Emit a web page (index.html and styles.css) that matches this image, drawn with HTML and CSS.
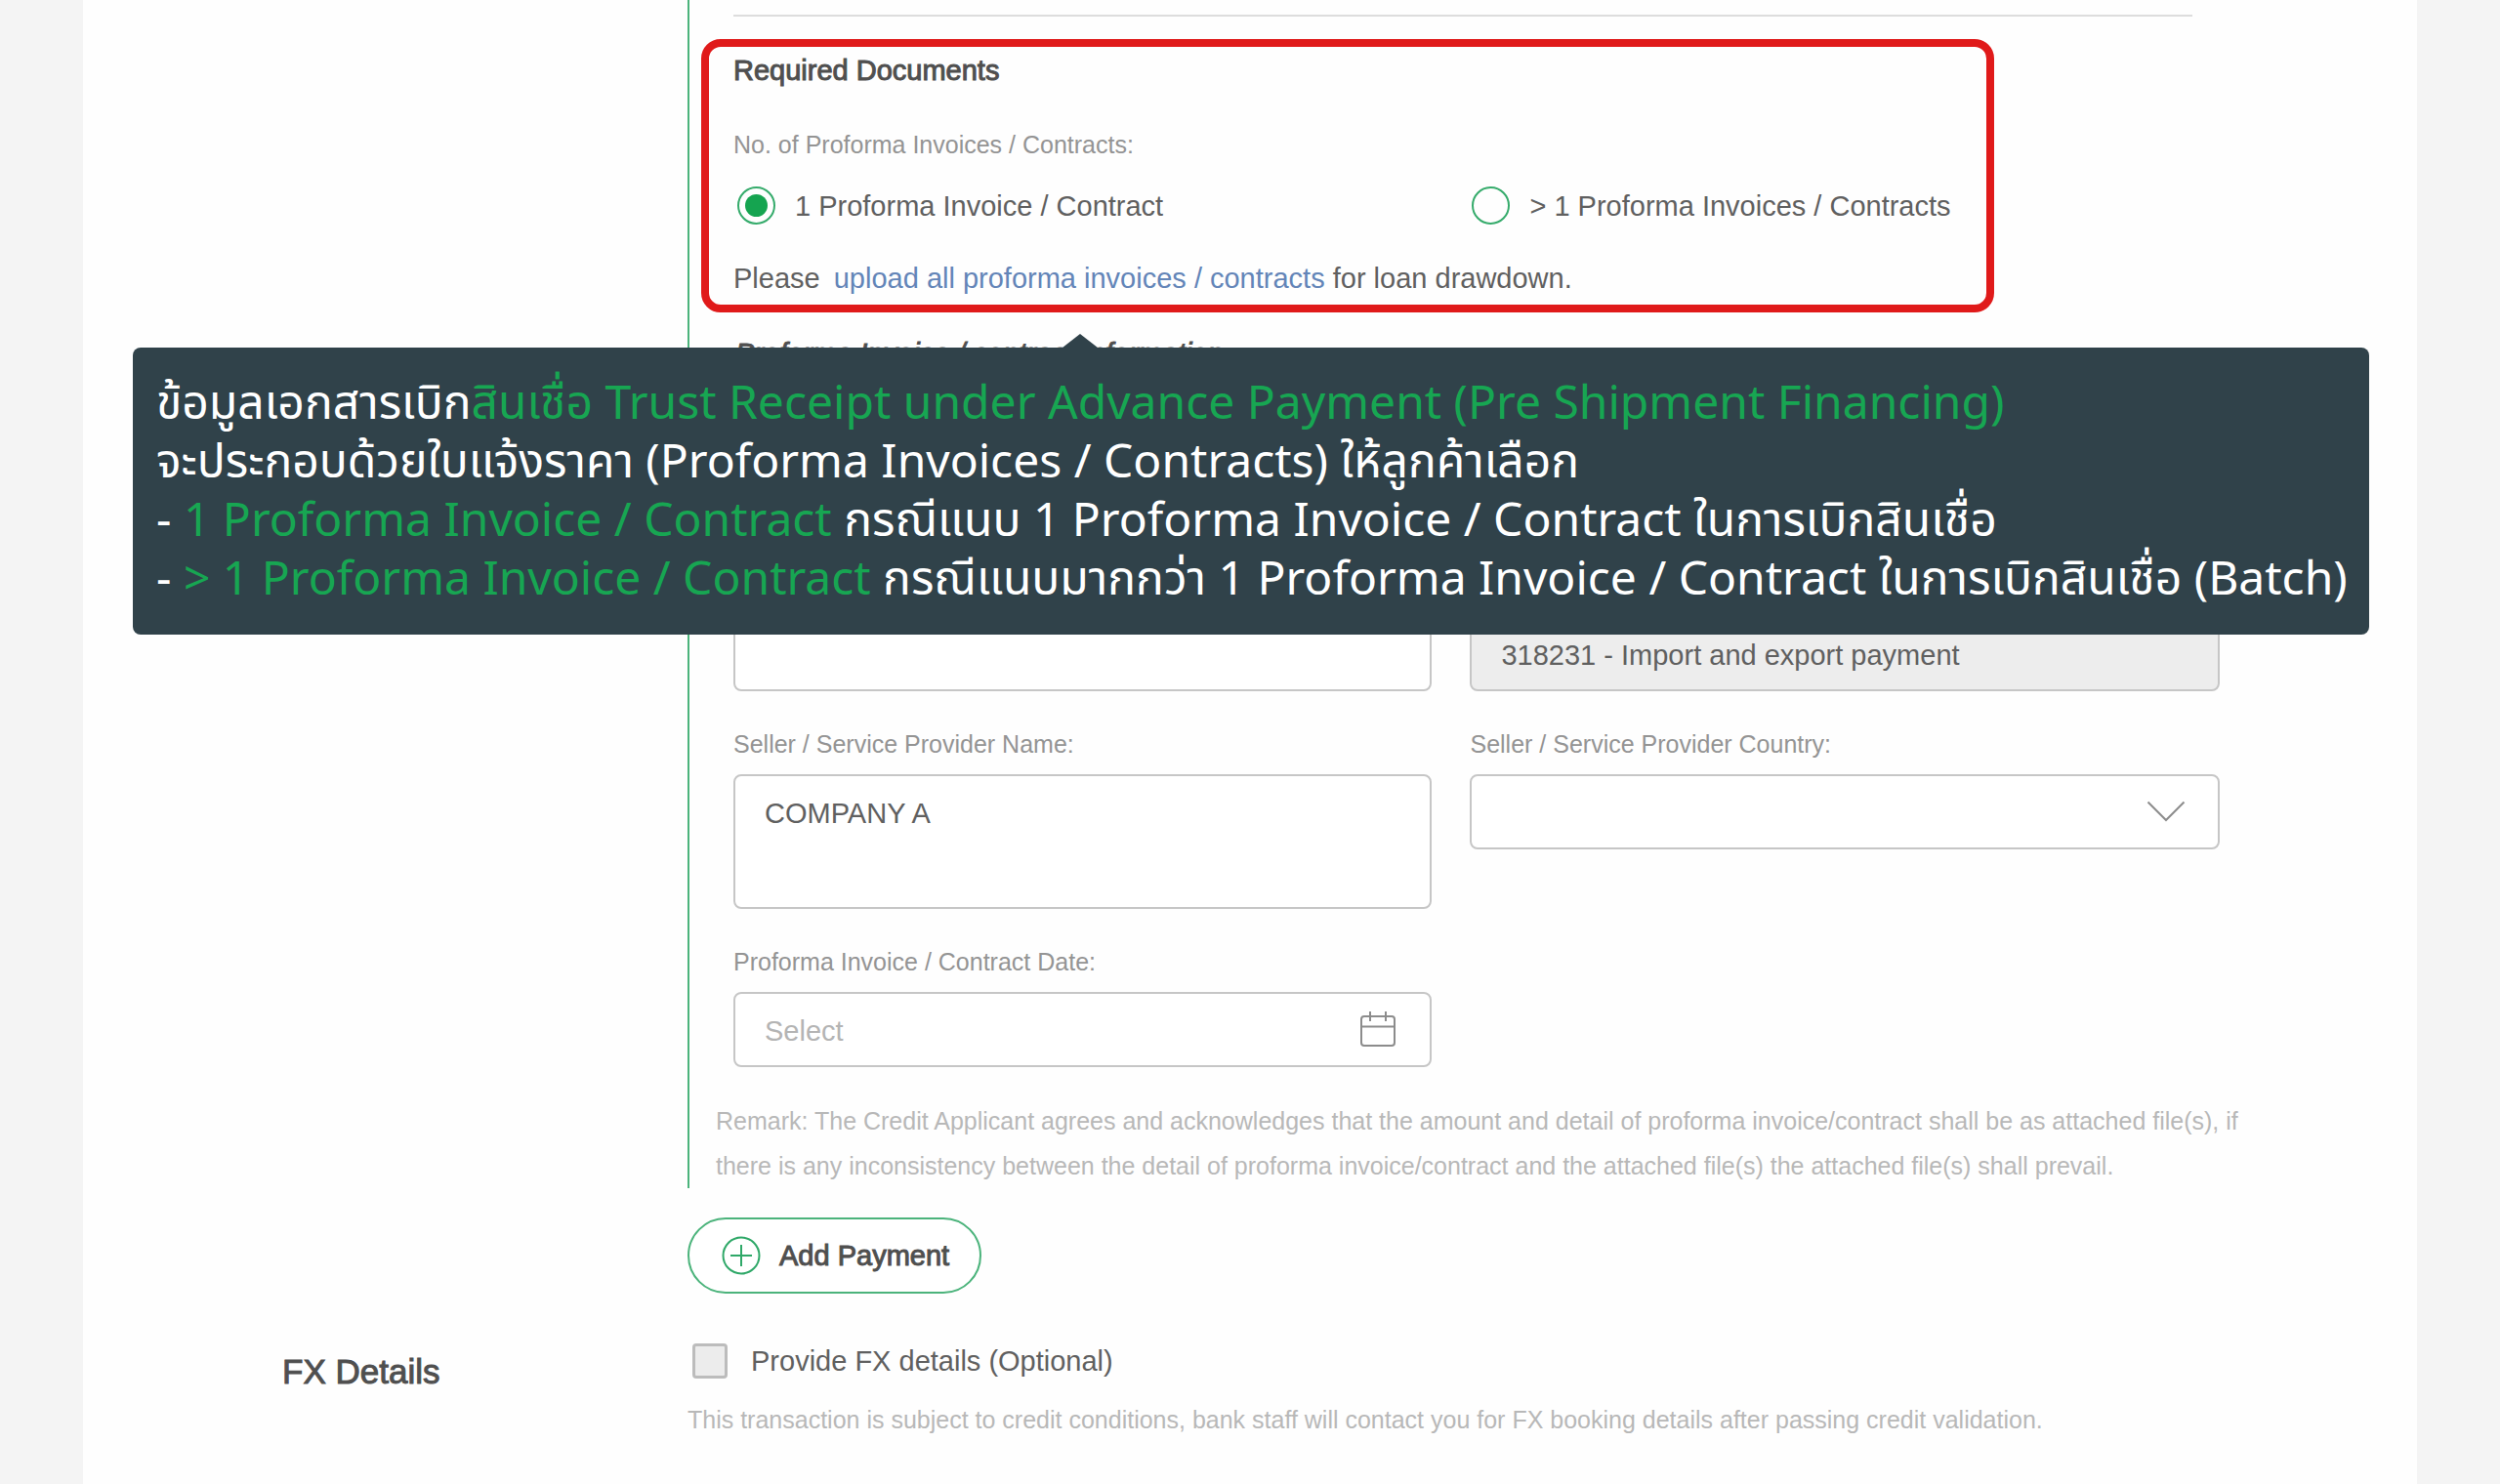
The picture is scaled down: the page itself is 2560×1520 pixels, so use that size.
FILE: index.html
```html
<!DOCTYPE html>
<html lang="en">
  <head>
    <meta charset="UTF-8" />
    <meta name="viewport" content="width=device-width, initial-scale=1.0" />
    <title>Loan Drawdown</title>
    <link rel="stylesheet" href="styles.css">
  </head>

  <body>
    <main class="sheet">
      <section class="row">
        <div class="row-title"></div>
        <div class="row-body">
          <div class="payment">
            <hr class="divider" />

            <!-- Required Documents -->
            <div class="highlight">
              <h3 class="heading">Required Documents</h3>
              <p class="label" id="docCount">No. of Proforma Invoices / Contracts:</p>
              <div class="radios" role="radiogroup" aria-labelledby="docCount">
                <label class="choice">
                  <input type="radio" name="docs" value="one" checked />
                  1 Proforma Invoice / Contract
                </label>
                <label class="choice">
                  <input type="radio" name="docs" value="many" />
                  &gt; 1 Proforma Invoices / Contracts
                </label>
              </div>
              <p class="upload">Please <a href="#">upload all proforma invoices / contracts</a> for loan drawdown.</p>
            </div>

            <!-- Invoice / contract information -->
            <h3 class="heading info-heading">Proforma Invoice / contract Information</h3>
            <div class="fields">
              <div class="field">
                <input type="text" aria-label="Proforma Invoice / Contract No." />
              </div>
              <div class="field">
                <input type="text" aria-label="Purpose" value="318231 - Import and export payment" disabled />
              </div>
              <div class="field">
                <label class="label" for="sellerName">Seller / Service Provider Name:</label>
                <textarea id="sellerName">COMPANY A</textarea>
              </div>
              <div class="field">
                <label class="label" for="sellerCountry">Seller / Service Provider Country:</label>
                <div class="control">
                  <select id="sellerCountry">
                    <option value=""></option>
                  </select>
                  <svg class="icon" viewBox="0 0 40 40" aria-hidden="true">
                    <path d="M1.500 10.500 L20 29 L38.500 10.500" />
                  </svg>
                </div>
              </div>
              <div class="field">
                <label class="label" for="contractDate">Proforma Invoice / Contract Date:</label>
                <div class="control">
                  <input type="text" id="contractDate" placeholder="Select" />
                  <svg class="icon" viewBox="0 0 40 40" aria-hidden="true">
                    <rect x="3" y="7" width="34" height="30" rx="3" />
                    <path d="M3 17.500 H37 M12 2 V12 M28 2 V12" />
                  </svg>
                </div>
              </div>
            </div>

            <p class="note remark">Remark: The Credit Applicant agrees and acknowledges that the amount and detail of proforma invoice/contract shall be as attached file(s), if there is any inconsistency between the detail of proforma invoice/contract and the attached file(s) the attached file(s) shall prevail.</p>
          </div>

          <button type="button" class="add-button">
            <svg viewBox="0 0 40 40" aria-hidden="true">
              <circle cx="20" cy="20" r="18.500" />
              <path d="M9 20 H31 M20 9 V31" />
            </svg>
            Add Payment
          </button>
        </div>
      </section>

      <!-- FX Details -->
      <section class="row">
        <h2 class="row-title">FX Details</h2>
        <div class="row-body">
          <label class="choice fx-choice">
            <input type="checkbox" />
            Provide FX details (Optional)
          </label>
          <p class="note">This transaction is subject to credit conditions, bank staff will contact you for FX booking details after passing credit validation.</p>
        </div>
      </section>

      <!-- Guide tooltip -->
      <div class="tooltip" role="note" lang="th">
        <p>ข้อมูลเอกสารเบิก<span>สินเชื่อ Trust Receipt under Advance Payment (Pre Shipment Financing)</span></p>
        <p>จะประกอบด้วยใบแจ้งราคา (Proforma Invoices / Contracts) ให้ลูกค้าเลือก</p>
        <p>- <span>1 Proforma Invoice / Contract</span> กรณีแนบ 1 Proforma Invoice / Contract ในการเบิกสินเชื่อ</p>
        <p>- <span>&gt; 1 Proforma Invoice / Contract</span> กรณีแนบมากกว่า 1 Proforma Invoice / Contract ในการเบิกสินเชื่อ (Batch)</p>
      </div>
    </main>
  </body>
</html>
```
FILE: styles.css
```css
/* General Styles */

* {
  box-sizing: border-box;
}

body {
  margin: 0;
  font-family: "Liberation Sans", Arial, sans-serif;
  font-size: 29px;
  line-height: 36px;
  color: #606060;
  background-color: #f4f4f4;
}

h2,
h3,
p {
  margin: 0;
}

.sheet {
  position: relative;
  min-height: 100vh;
  margin: 0 85px;
  background-color: #fefefe;
}

.row {
  display: flex;
}

.row-title {
  flex: 0 0 619px;
  padding: 62px 0 0 204px;
  font-size: 35px;
  font-weight: normal;
  color: #4f4f4f;
  -webkit-text-stroke: 1px #4f4f4f;
}

.row-body {
  flex: 1;
  padding-right: 165px;
}

/* Payment */

.payment {
  padding: 15px 0 0 12px;
  border-left: 2px solid #4bb37b;
}

.divider {
  height: 2px;
  margin: 0 65px 23px 33px;
  border: none;
  background-color: #ddd;
}

.highlight {
  margin-right: 268px;
  padding: 6px 25px 9px;
  border: 8px solid #e01a1a;
  border-radius: 20px;
}

.heading {
  font-size: 29px;
  font-weight: normal;
  color: #4f4f4f;
  -webkit-text-stroke: 1px #4f4f4f;
}

.info-heading {
  margin: 24px 0 0 35px;
  font-style: italic;
}

.label {
  display: block;
  font-size: 25px;
  line-height: 37px;
  color: #949494;
}

.highlight .label {
  margin: 40px 0 24px;
}

.radios {
  display: grid;
  grid-template-columns: 3fr 2fr;
  padding-left: 4px;
}

.choice {
  display: flex;
  align-items: center;
  gap: 20px;
  white-space: nowrap;
}

input[type="radio"] {
  appearance: none;
  width: 39px;
  height: 39px;
  margin: 0;
  padding: 6px;
  border: 2px solid #35ab6b;
  border-radius: 50%;
}

input[type="radio"]:checked::before {
  content: "";
  display: block;
  height: 100%;
  border-radius: 50%;
  background-color: #15a450;
}

.upload {
  margin-top: 37px;
}

.upload a {
  margin-left: 6px;
  color: #6385b8;
  text-decoration: none;
}

/* Fields */

.fields {
  display: grid;
  grid-template-columns: 715fr 767fr;
  gap: 36px 39px;
  align-items: start;
  margin: 251px 37px 0 33px;
}

.field .label {
  margin-bottom: 12px;
}

.field input,
.field select,
.field textarea {
  display: block;
  width: 100%;
  height: 77px;
  padding: 4px 30px 0;
  border: 2px solid #c6c6c6;
  border-radius: 8px;
  background-color: #fff;
  font: inherit;
  color: #606060;
}

.field textarea {
  height: 138px;
  padding-top: 20px;
  resize: none;
}

.field select {
  appearance: none;
}

.field input:disabled {
  background-color: #ededed;
}

.field input::placeholder {
  color: #b4b4b4;
}

.control {
  position: relative;
}

.icon {
  position: absolute;
  top: 18px;
  right: 35px;
  width: 40px;
  height: 40px;
  fill: none;
  stroke: #8c8c8c;
  stroke-width: 2;
  pointer-events: none;
}

.note {
  font-size: 25px;
  line-height: 46px;
  color: #b8b8b8;
}

.remark {
  padding: 32px 0 0 15px;
}

.add-button {
  display: flex;
  align-items: center;
  gap: 19px;
  height: 78px;
  margin-top: 30px;
  padding: 0 31px 0 33px;
  border: 2px solid #4bb37b;
  border-radius: 39px;
  background-color: #fff;
  font: inherit;
  color: #4f4f4f;
  -webkit-text-stroke: 1px #4f4f4f;
}

.add-button svg {
  width: 40px;
  height: 40px;
  fill: none;
  stroke: #2fa868;
  stroke-width: 2;
}

/* FX Details */

.fx-choice {
  gap: 24px;
  margin: 51px 0 19px 5px;
}

input[type="checkbox"] {
  appearance: none;
  width: 36px;
  height: 36px;
  margin: 0;
  border: 3px solid #bcbcbc;
  border-radius: 4px;
  background-color: #ececec;
}

/* Tooltip */

.tooltip {
  position: absolute;
  top: 356px;
  left: 51px;
  right: 49px;
  padding: 25px 24px 29px;
  border-radius: 8px;
  background-color: #30424a;
  font-family: "Noto Sans", "Noto Sans Thai", sans-serif;
  font-size: 48px;
  line-height: 60px;
  color: #fff;
  white-space: nowrap;
}

.tooltip::before {
  content: "";
  position: absolute;
  bottom: 100%;
  left: 952px;
  border: 18px solid transparent;
  border-top: none;
  border-bottom: 14px solid #30424a;
}

.tooltip span {
  color: #17a652;
}
```
